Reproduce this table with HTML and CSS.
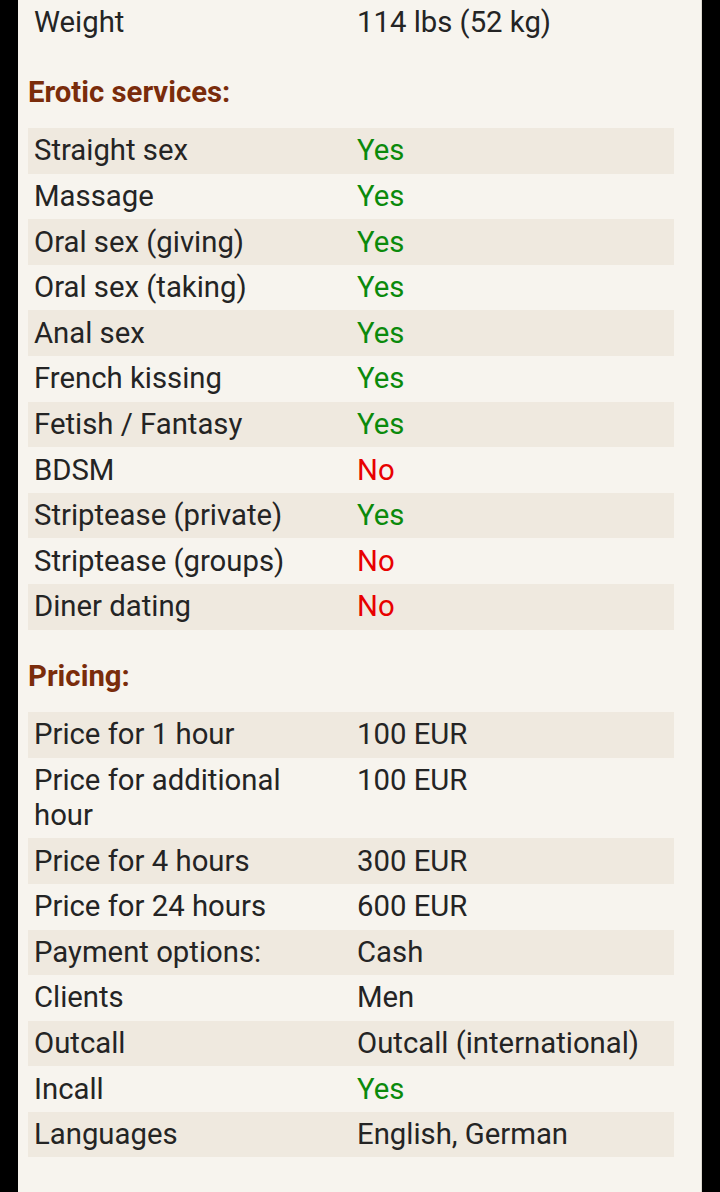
FILE: index.html
```html
<!DOCTYPE html>
<html lang="en">
<head>
<meta charset="utf-8">
<title>Profile details</title>
<link rel="stylesheet" href="styles.css">
</head>
<body>
<div class="panel">
  <table class="info">
    <tr><td>Weight</td><td>114 lbs (52 kg)</td></tr>
  </table>

  <h3 class="section-title">Erotic services:</h3>
  <table class="info">
    <tr class="alt"><td>Straight sex</td><td class="yes">Yes</td></tr>
    <tr><td>Massage</td><td class="yes">Yes</td></tr>
    <tr class="alt"><td>Oral sex (giving)</td><td class="yes">Yes</td></tr>
    <tr><td>Oral sex (taking)</td><td class="yes">Yes</td></tr>
    <tr class="alt"><td>Anal sex</td><td class="yes">Yes</td></tr>
    <tr><td>French kissing</td><td class="yes">Yes</td></tr>
    <tr class="alt"><td>Fetish / Fantasy</td><td class="yes">Yes</td></tr>
    <tr><td>BDSM</td><td class="no">No</td></tr>
    <tr class="alt"><td>Striptease (private)</td><td class="yes">Yes</td></tr>
    <tr><td>Striptease (groups)</td><td class="no">No</td></tr>
    <tr class="alt"><td>Diner dating</td><td class="no">No</td></tr>
  </table>

  <h3 class="section-title">Pricing:</h3>
  <table class="info">
    <tr class="alt"><td>Price for 1 hour</td><td>100 EUR</td></tr>
    <tr><td>Price for additional hour</td><td>100 EUR</td></tr>
    <tr class="alt"><td>Price for 4 hours</td><td>300 EUR</td></tr>
    <tr><td>Price for 24 hours</td><td>600 EUR</td></tr>
    <tr class="alt"><td>Payment options:</td><td>Cash</td></tr>
    <tr><td>Clients</td><td>Men</td></tr>
    <tr class="alt"><td>Outcall</td><td>Outcall (international)</td></tr>
    <tr><td>Incall</td><td class="yes">Yes</td></tr>
    <tr class="alt"><td>Languages</td><td>English, German</td></tr>
  </table>
</div>
</body>
</html>
```

FILE: styles.css
```css
html, body {
  margin: 0;
  padding: 0;
  background: #000;
}

body {
  font-family: Roboto, "Liberation Sans", sans-serif;
  color: #242424;
}

.panel {
  margin: 0 18px;
  min-height: 1192px;
  background: #f7f4ee;
  padding: 0 27px 0 10px;
  border-right: 1px solid #ddd8cf;
  box-sizing: border-box;
}

.info {
  width: 100%;
  border-collapse: collapse;
  table-layout: fixed;
}

.info td {
  width: 50%;
  padding: 5.3px 6px;
  font-size: 29.3px;
  line-height: 35px;
  vertical-align: top;
}

.info tr.alt td {
  background: #efe9df;
}

.yes {
  color: #0b8a0b;
}

.no {
  color: #e80000;
}

.section-title {
  margin: 29px 0 18.5px;
  font-size: 29.3px;
  line-height: 35px;
  font-weight: bold;
  color: #7a2c0b;
}
```
